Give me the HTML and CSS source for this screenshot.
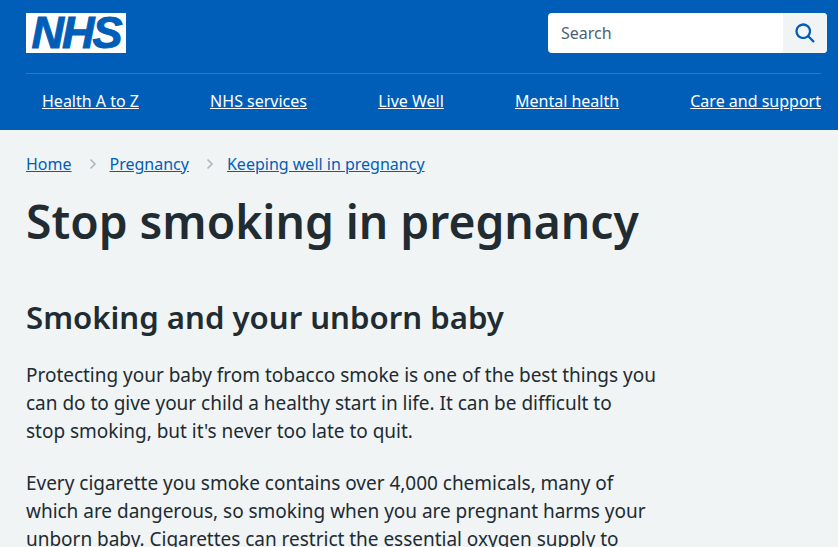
FILE: index.html
```html
<!DOCTYPE html>
<html lang="en">
<head>
    <meta charset="utf-8">
    <title>Stop smoking in pregnancy</title>
    <link rel="stylesheet" href="styles.css">
</head>
<body>
    <header class="header">
        <div class="header-top">
            <a href="#" class="logo">NHS</a>
            <form class="search">
                <span class="search-input">Search</span>
                <button type="button" class="search-btn" aria-label="Search">
                    <svg viewBox="0 0 24 24" width="27" height="27">
                        <path d="M19.71 18.29l-4.11-4.1a7 7 0 1 0-1.41 1.41l4.1 4.11a1 1 0 0 0 1.42 0 1 1 0 0 0 0-1.42zM5 10a5 5 0 1 1 5 5 5 5 0 0 1-5-5z" fill="#005eb8"/>
                    </svg>
                </button>
            </form>
        </div>
        <nav class="nav">
            <a href="#">Health A to Z</a>
            <a href="#">NHS services</a>
            <a href="#">Live Well</a>
            <a href="#">Mental health</a>
            <a href="#">Care and support</a>
        </nav>
    </header>

    <main class="main">
        <ol class="breadcrumb">
            <li><a href="#">Home</a></li>
            <li class="sep"><svg viewBox="0 0 8 12" width="8" height="12"><path d="M1.5 1.5L6 6l-4.5 4.5" fill="none" stroke="#aeb7bd" stroke-width="1.6"/></svg></li>
            <li><a href="#">Pregnancy</a></li>
            <li class="sep"><svg viewBox="0 0 8 12" width="8" height="12"><path d="M1.5 1.5L6 6l-4.5 4.5" fill="none" stroke="#aeb7bd" stroke-width="1.6"/></svg></li>
            <li><a href="#">Keeping well in pregnancy</a></li>
        </ol>

        <h1>Stop smoking in pregnancy</h1>
        <h2>Smoking and your unborn baby</h2>
        <p>Protecting your baby from tobacco smoke is one of the best things you<br>can do to give your child a healthy start in life. It can be difficult to<br>stop smoking, but it's never too late to quit.</p>
        <p>Every cigarette you smoke contains over 4,000 chemicals, many of<br>which are dangerous, so smoking when you are pregnant harms your<br>unborn baby. Cigarettes can restrict the essential oxygen supply to</p>
    </main>
</body>
</html>
```
FILE: styles.css
```css
html, body {
    height: 100%;
}

body {
    margin: 0;
    background: #f0f4f5;
    color: #212b32;
    font-family: "Noto Sans", "Open Sans", sans-serif;
    font-size: 19px;
    overflow: hidden;
}

.header {
    background: #005eb8;
    padding: 13px 17px 0 26px;
}

.header-top {
    display: flex;
    justify-content: space-between;
    align-items: flex-start;
    height: 60px;
}

.logo {
    display: block;
    width: 100px;
    height: 40px;
    background: #fff;
    color: #005eb8;
    font-family: "Liberation Sans", sans-serif;
    font-size: 45px;
    font-style: italic;
    font-weight: 700;
    line-height: 40px;
    letter-spacing: -2px;
    text-align: center;
    text-decoration: none;
    -webkit-text-stroke: 1px #005eb8;
}

.search {
    display: flex;
    width: 279px;
    height: 40px;
    margin-right: -6px;
    background: #fff;
    border-radius: 4px;
    overflow: hidden;
}

.search-input {
    flex: 1;
    padding-left: 13px;
    color: #4c6272;
    font-size: 16px;
    line-height: 40px;
}

.search-btn {
    display: flex;
    align-items: center;
    justify-content: center;
    width: 44px;
    padding: 0;
    border: none;
    background: #f0f4f5;
}

.nav {
    display: flex;
    justify-content: space-between;
    padding: 15px 0 17px 16px;
    border-top: 1px solid #2b78c6;
}

.nav a {
    color: #fff;
    font-size: 16px;
    line-height: 24px;
}

.main {
    width: 640px;
    padding: 22px 0 0 26px;
}

.breadcrumb {
    display: flex;
    align-items: center;
    gap: 13px;
    margin: 0;
    padding: 0;
    list-style: none;
    font-size: 16px;
    line-height: 24px;
}

.breadcrumb a {
    color: #005eb8;
}

.sep {
    display: flex;
    padding-left: 4px;
}

h1 {
    margin: 17px 0 0;
    font-size: 46.2px;
    font-weight: 600;
    line-height: 58px;
}

h2 {
    margin: 46px 0 0;
    font-size: 31.15px;
    font-weight: 600;
    line-height: 40px;
}

p {
    margin: 24px 0 0;
    letter-spacing: -0.02px;
    line-height: 28px;
}
```
